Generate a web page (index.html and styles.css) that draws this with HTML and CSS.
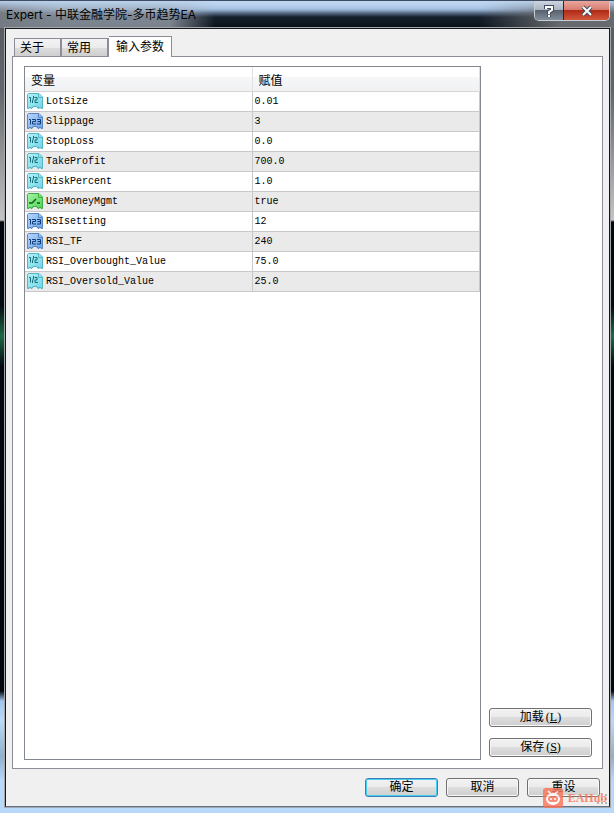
FILE: index.html
```html
<!DOCTYPE html>
<html lang="zh-CN">

<head>
    <meta charset="UTF-8">
    <meta name="viewport" content="width=device-width, initial-scale=1.0">
    <title>Expert - 中联金融学院-多币趋势EA</title>
    <link rel="stylesheet" href="styles.css">
</head>

<body>
    <!-- Icon shapes shared by the rows -->
    <svg class="defs" aria-hidden="true">
        <defs>
            <linearGradient id="cyan" x1="0" y1="0" x2="1" y2="1">
                <stop offset="0" stop-color="#b4eff6" />
                <stop offset="1" stop-color="#70d6e6" />
            </linearGradient>
            <linearGradient id="blue" x1="0" y1="0" x2="1" y2="1">
                <stop offset="0" stop-color="#b8d8ff" />
                <stop offset="1" stop-color="#6ba3e6" />
            </linearGradient>
            <linearGradient id="green" x1="0" y1="0" x2="1" y2="1">
                <stop offset="0" stop-color="#a4f5a0" />
                <stop offset="1" stop-color="#50d45a" />
            </linearGradient>
            <symbol id="page" viewBox="0 0 16 16">
                <path d="M1.500.5h10.500l3.500 3.500v11.500h-1.500v-1h-2v1h-1v-1h-1v-1h-4v1h-1v1h-1v-1h-2v1H.5v-14z" />
                <path d="M11.500.5v4h4" />
            </symbol>
            <symbol id="real" viewBox="0 0 16 16">
                <use href="#page" fill="url(#cyan)" stroke="#55b5c2" />
                <path d="M2 4.500h1.500v5M6.500 3v2l-1 3v2M7.500 4.500h2.500v2.500h-2v2.500h3" fill="none" stroke="#16707c" />
            </symbol>
            <symbol id="integer" viewBox="0 0 16 16">
                <use href="#page" fill="url(#blue)" stroke="#5585c3" />
                <path d="M2 6.500h1.500v5M5 6.500h3.500v2h-3v2.500h3.500M10 6.500h3.500v4.500H10M10.500 8.500h3" fill="none" stroke="#123d78" />
            </symbol>
            <symbol id="bool" viewBox="0 0 16 16">
                <use href="#page" fill="url(#green)" stroke="#3fac47" />
                <path d="M2 10h3l4-4M10 10h3" fill="none" stroke="#115d17" stroke-width="1.500" />
            </symbol>
        </defs>
    </svg>

    <div class="window">
        <header class="titlebar">
            <h1>Expert - 中联金融学院-多币趋势EA</h1>
            <div class="window-buttons">
                <button class="help" type="button" aria-label="帮助">
                    <svg width="10" height="14" viewBox="0 0 10 14">
                        <path d="M2 5V3h6v3L5 8v2M5 11v2" class="glyph-edge" />
                        <path d="M2 5V3h6v3L5 8v2M5 11v2" class="glyph" />
                    </svg>
                </button>
                <button class="close" type="button" aria-label="关闭">
                    <svg width="14" height="12" viewBox="0 0 14 12">
                        <path d="M3 2l8 8M11 2L3 10" class="glyph-edge" />
                        <path d="M3 2l8 8M11 2L3 10" class="glyph" />
                    </svg>
                </button>
            </div>
        </header>

        <main class="client">
            <nav class="tabs" role="tablist">
                <button class="tab" type="button" role="tab" aria-selected="false">关于</button>
                <button class="tab" type="button" role="tab" aria-selected="false">常用</button>
                <button class="tab active" type="button" role="tab" aria-selected="true">输入参数</button>
            </nav>

            <section class="panel">
                <div class="list">
                    <table>
                        <thead>
                            <tr><th>变量</th><th>赋值</th></tr>
                        </thead>
                        <tbody>
                            <tr><td><svg><use href="#real" /></svg><span>LotSize</span></td><td>0.01</td></tr>
                            <tr><td><svg><use href="#integer" /></svg><span>Slippage</span></td><td>3</td></tr>
                            <tr><td><svg><use href="#real" /></svg><span>StopLoss</span></td><td>0.0</td></tr>
                            <tr><td><svg><use href="#real" /></svg><span>TakeProfit</span></td><td>700.0</td></tr>
                            <tr><td><svg><use href="#real" /></svg><span>RiskPercent</span></td><td>1.0</td></tr>
                            <tr><td><svg><use href="#bool" /></svg><span>UseMoneyMgmt</span></td><td>true</td></tr>
                            <tr><td><svg><use href="#integer" /></svg><span>RSIsetting</span></td><td>12</td></tr>
                            <tr><td><svg><use href="#integer" /></svg><span>RSI_TF</span></td><td>240</td></tr>
                            <tr><td><svg><use href="#real" /></svg><span>RSI_Overbought_Value</span></td><td>75.0</td></tr>
                            <tr><td><svg><use href="#real" /></svg><span>RSI_Oversold_Value</span></td><td>25.0</td></tr>
                        </tbody>
                    </table>
                </div>
                <div class="side">
                    <button class="btn" type="button">加载<span class="key">(<u>L</u>)</span></button>
                    <button class="btn" type="button">保存<span class="key">(<u>S</u>)</span></button>
                </div>
            </section>

            <footer class="actions">
                <button class="btn default" type="button">确定</button>
                <button class="btn" type="button">取消</button>
                <button class="btn" type="button">重设</button>
            </footer>
        </main>

        <!-- Resize grip -->
        <svg class="grip" width="11" height="11" viewBox="0 0 11 11">
            <path d="M8 0h2v2H8zM4 4h2v2H4zM8 4h2v2H8zM0 8h2v2H0zM4 8h2v2H4zM8 8h2v2H8z" fill="#b5b5b5" />
        </svg>

        <div class="watermark">
            <svg width="20" height="20" viewBox="0 0 20 20">
                <rect width="20" height="20" rx="3" fill="#fa7256" />
                <path d="M5 3l3 3M15 3l-3 3" stroke="#fff" stroke-width="1.500" />
                <ellipse cx="10" cy="11" rx="7" ry="6" fill="#fff" />
                <rect x="5" y="8" width="10" height="6" rx="3" fill="#fa7256" />
                <circle cx="8" cy="11" r="1" fill="#fff" />
                <circle cx="12" cy="11" r="1" fill="#fff" />
            </svg>
            <span>EAHub</span>
        </div>
    </div>
</body>

</html>
```
FILE: styles.css
```css
* {
    margin: 0;
    padding: 0;
    box-sizing: border-box;
}

body {
    font-family: "Liberation Sans", "Noto Sans CJK SC", sans-serif;
    font-size: 12px;
    color: #000;
}

button {
    font: inherit;
    color: inherit;
}

.defs {
    position: absolute;
    width: 0;
    height: 0;
}

.window {
    position: relative;
    display: flex;
    flex-direction: column;
    min-height: 100vh;
    padding: 0 4px 6px 5px;
    border-top: 1px solid #3f4d63;
    background: linear-gradient(#55585c 0, #62666a 90px, #c4c4c4 219px, #03070d 221px, #050b12 305px, #1d6a43 335px, #04090f 365px, #03070d 690px, #9fc6ee 700px, #bcd9f8 720px, #91aecb 755px, #b9d9fb 780px);
}

/* Title bar */
.titlebar {
    display: flex;
    justify-content: space-between;
    height: 27px;
    margin: 0 -4px 0 -5px;
    padding: 0 4px 0 6px;
    background:
        linear-gradient(rgba(190, 214, 242, 0.9) 0, rgba(190, 214, 242, 0) 12px),
        linear-gradient(90deg, #747a82 0, rgba(150, 160, 170, 0.8) 60px, rgba(150, 160, 170, 0.8) 170px, rgba(120, 130, 140, 0) 215px, rgba(100, 105, 110, 0) 480px, #666a6e 560px),
        linear-gradient(#c3daf3 0, #98b6da 8px, #16202d 16px, #0a1018 27px);
}

.titlebar h1 {
    font-family: Inter, "Noto Sans CJK SC", sans-serif;
    font-size: 12px;
    font-weight: normal;
    line-height: 28px;
}

.window-buttons {
    display: flex;
    height: 20px;
    border: 1px solid #c6ccd4;
    border-top: none;
    border-radius: 0 0 5px 5px;
    overflow: hidden;
}

.window-buttons button {
    display: flex;
    align-items: center;
    justify-content: center;
    border: none;
}

.help {
    width: 28px;
    background: linear-gradient(#cdd5e0 0, #a6b1c0 50%, #59636f 50%, #828d9c);
}

.window-buttons .close {
    width: 46px;
    border-left: 1px solid #3b2027;
    background: linear-gradient(#eba69d 0, #d4796c 50%, #b02a16 50%, #d2583d);
}

.glyph-edge {
    fill: none;
    stroke: #444b5c;
    stroke-width: 4;
}

.glyph {
    fill: none;
    stroke: #fff;
    stroke-width: 2;
}

/* Dialog body */
.client {
    flex: 1;
    display: flex;
    flex-direction: column;
    padding: 7px 6px 9px;
    border: 1px solid #14181c;
    border-bottom-color: #5f7186;
    outline: 1px solid #a4a8ac;
    background: #f0f0f0;
}

.tabs {
    display: flex;
    align-items: flex-end;
    margin-left: 2px;
}

.tab {
    height: 18px;
    padding: 0 16px 0 5px;
    border: 1px solid #8c8d96;
    border-bottom: none;
    border-right-width: 2px;
    background: linear-gradient(#f3f3f3 0, #ebebeb 50%, #dddddd 50%, #cfcfcf);
    line-height: 19px;
}

.tab + .tab {
    border-left: none;
}

.tab.active {
    height: 21px;
    margin-bottom: -1px;
    padding: 0 7px;
    border-right-width: 1px;
    background: #fff;
    line-height: 19px;
    z-index: 1;
}

.panel {
    flex: 1;
    display: flex;
    gap: 8px;
    padding: 9px 10px 8px 11px;
    border: 1px solid #8c8d96;
    background: #fff;
}

.list {
    flex: 1;
    border: 1px solid #828790;
}

table {
    width: 100%;
    border-collapse: separate;
    border-spacing: 0;
    table-layout: fixed;
}

th {
    height: 25px;
    padding: 1px 0 0 6px;
    border-right: 1px solid #dfe0e2;
    border-bottom: 1px solid #d5d5d5;
    background: linear-gradient(#fff 0, #fff 40%, #f6f7f8 40%, #f0f1f2);
    font-weight: normal;
    text-align: left;
}

td {
    height: 20px;
    padding: 1px 0 0 2px;
    border-right: 1px solid #c8c8c8;
    border-bottom: 1px solid #c8c8c8;
    font-family: "Liberation Mono", "Noto Sans CJK SC", monospace;
    font-size: 10px;
    line-height: 18px;
}

tbody tr:nth-child(even) {
    background: #eaeaea;
}

td svg {
    width: 16px;
    height: 16px;
    margin-right: 3px;
    vertical-align: top;
}

.side {
    display: flex;
    flex-direction: column;
    justify-content: flex-end;
    gap: 11px;
    width: 103px;
    padding-bottom: 3px;
}

.btn {
    height: 19px;
    border: 1px solid #707070;
    border-radius: 3px;
    background: linear-gradient(#f2f2f2 0, #ebebeb 50%, #dddddd 50%, #cfcfcf);
    box-shadow: inset 0 0 0 1px #f8f8f8;
    line-height: 17px;
}

.btn.default {
    border-color: #3c7fb1;
    box-shadow: inset 0 0 0 1px #48cdf4;
}

.key {
    margin-left: 2px;
    font-family: "Liberation Serif", serif;
}

.actions {
    display: flex;
    justify-content: flex-end;
    gap: 8px;
    padding: 9px 3px 0 0;
}

.actions .btn {
    width: 73px;
}

.grip {
    position: absolute;
    right: 6px;
    bottom: 8px;
}

/* Site mark over the corner */
.watermark {
    position: absolute;
    right: 7px;
    bottom: 5px;
    display: flex;
    align-items: center;
    gap: 5px;
    color: #fa7256;
    font-family: "Liberation Serif", serif;
    font-size: 12px;
    font-weight: bold;
    opacity: 0.8;
}
```
